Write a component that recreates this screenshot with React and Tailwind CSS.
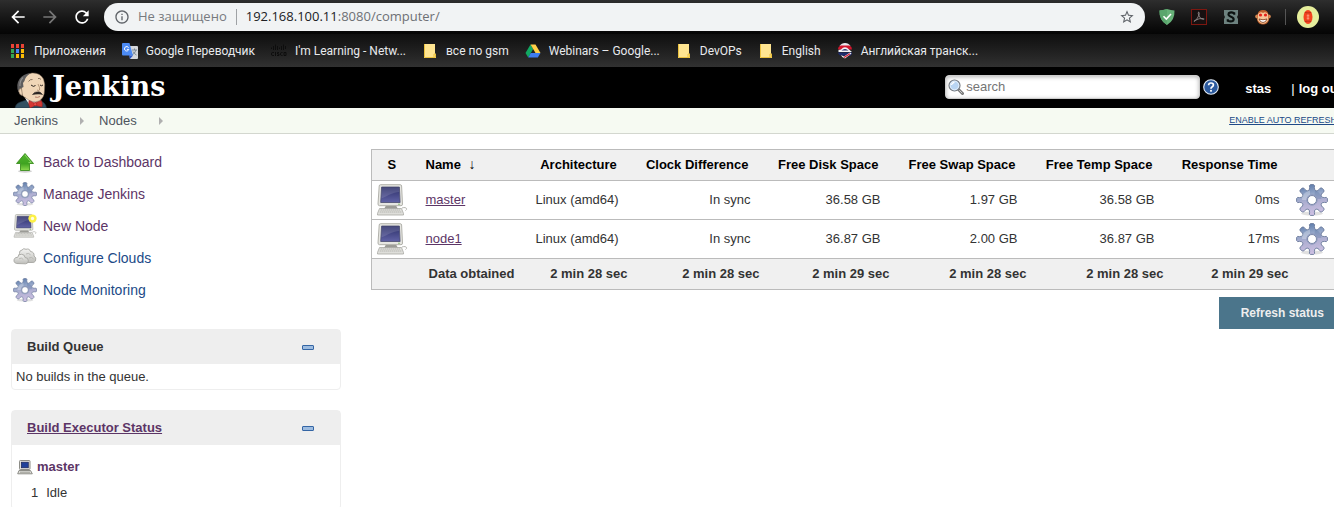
import React from "react";
import { MdArrowBack, MdArrowForward, MdRefresh, MdOutlineInfo, MdStarBorder } from "react-icons/md";

const gearPath = (() => {
  const pts = [];
  for (let i = 0; i < 8; i++) {
    const a = (i * Math.PI) / 4;
    const shape = [
      [-0.39, 10],
      [-0.28, 10.4],
      [-0.19, 12.5],
      [-0.18, 14.6],
      [-0.1, 15.5],
      [0.1, 15.5],
      [0.18, 14.6],
      [0.19, 12.5],
      [0.28, 10.4],
    ];
    shape.forEach(([d, r]) => {
      pts.push(
        `${(16 + r * Math.sin(a + d)).toFixed(2)},${(16 - r * Math.cos(a + d)).toFixed(2)}`
      );
    });
  }
  return `M${pts.join("L")}Z M20.500,16a4.500,4.500 0 1 0 -9,0a4.500,4.500 0 1 0 9,0Z`;
})();

function Gear({ className }) {
  return (
    <svg viewBox="0 0 32 32" className={className} aria-hidden="true">
      <defs>
        <linearGradient id="gearFill" x1="0.2" y1="0" x2="0.4" y2="1">
          <stop offset="0" stopColor="#5878a8" />
          <stop offset="0.35" stopColor="#94a6c8" />
          <stop offset="0.6" stopColor="#b0b0d2" />
          <stop offset="1" stopColor="#cdc0e2" />
        </linearGradient>
      </defs>
      <ellipse cx="16" cy="29.500" rx="11" ry="2" fill="#000" opacity="0.12" />
      <path d={gearPath} fill="url(#gearFill)" fillRule="evenodd" stroke="#6b7a9c" strokeWidth="0.900" strokeLinejoin="round" />
      <path d="M6 16C6 11 9 7.500 14 6.500V11C12 11.800 11 13.500 10.800 16Z" fill="#fff" opacity="0.28" />
      <path d="M19 6.500C23 7.500 25.500 11 25.500 15L21 15C20.800 13 20 12 18.500 11Z" fill="#3f5f93" opacity="0.22" />
      <circle cx="16" cy="16" r="5.200" fill="none" stroke="#8c99bb" strokeWidth="0.900" />
    </svg>
  );
}

function Computer({ className, isNew }) {
  return (
    <svg viewBox="0 0 32 32" className={className} aria-hidden="true">
      <defs>
        <linearGradient id="screenFill" x1="0" y1="0" x2="0" y2="1">
          <stop offset="0" stopColor="#2b2e68" />
          <stop offset="1" stopColor="#6163a6" />
        </linearGradient>
      </defs>
      <path d="M26 24C30 22.500 32 25 29.500 26.500" fill="none" stroke="#b5b5b0" strokeWidth="1" />
      <path d="M10 21.500H20L22 25H8Z" fill="#9b9b96" />
      <path d="M3.500 24.500H25.500L27.500 29.500V31H1.500V29.500Z" fill="#dededa" stroke="#a8a8a3" strokeWidth="0.800" />
      <path d="M4.500 26H24.500M3.800 28H25.500" stroke="#b3b3ae" strokeWidth="0.900" strokeDasharray="1.500 .5" />
      <path d="M4.500 0.700H24.300Q25.500 0.700 25.600 2L26.500 20Q26.600 21.700 25 21.700H3.500Q2 21.700 2 20L3.200 2Q3.300 0.700 4.500 0.700Z" fill="#e6e6e1" stroke="#a9a9a3" strokeWidth="0.900" />
      <path d="M5.600 3H23.400L24.100 18.500H4.700Z" fill="url(#screenFill)" stroke="#4a4c6e" strokeWidth="0.800" />
      <path d="M6 3.400H23L23.200 8C17 8 12 12 5.300 14.500Z" fill="#fff" opacity="0.130" />
      <circle cx="23" cy="20.200" r="0.700" fill="#6cab4d" />
      {isNew && (
        <g>
          <circle cx="26" cy="6" r="5.500" fill="#fcf046" />
          <circle cx="26" cy="6" r="2.200" fill="#fffde0" />
        </g>
      )}
    </svg>
  );
}

function SmallComputer() {
  return (
    <svg viewBox="0 0 16 16" className="h-4 w-4 shrink-0" aria-hidden="true">
      <rect x="2.500" y="1.500" width="10.500" height="9" rx="0.800" fill="#e8e8e4" stroke="#8c8c86" />
      <rect x="4.300" y="3.200" width="7" height="5.600" fill="#20419a" stroke="#1a2452" strokeWidth="0.700" />
      <path d="M2 11.500H13.500L15.300 14.800H0.700Z" fill="#deded9" stroke="#8c8c86" />
      <path d="M3 13.200H13" stroke="#9b9b94" />
    </svg>
  );
}

function UpArrow({ className }) {
  return (
    <svg viewBox="0 0 24 24" className={className} aria-hidden="true">
      <defs>
        <linearGradient id="arrowFill" x1="0" y1="0" x2="0" y2="1">
          <stop offset="0" stopColor="#52b52e" />
          <stop offset="0.6" stopColor="#3fa321" />
          <stop offset="1" stopColor="#8fdb4f" />
        </linearGradient>
      </defs>
      <ellipse cx="12" cy="21.300" rx="7" ry="1.500" fill="#000" opacity="0.18" />
      <path d="M12 3.500L20.500 13.500H16.500V20.500H7.500V13.500H3.500Z" fill="url(#arrowFill)" stroke="#3d8f20" strokeWidth="0.900" strokeLinejoin="round" />
      <path d="M12 5L18.300 12.500H15.500" fill="none" stroke="#a5e57e" strokeWidth="0.700" />
    </svg>
  );
}

function Clouds({ className }) {
  return (
    <svg viewBox="0 0 24 24" className={className} aria-hidden="true">
      <defs>
        <linearGradient id="cloudFill" x1="0" y1="0" x2="0" y2="1">
          <stop offset="0" stopColor="#f4f4f2" />
          <stop offset="1" stopColor="#bdbdb9" />
        </linearGradient>
      </defs>
      <path d="M7 12Q4.500 10 6.500 7.500Q6 4.500 9 4Q10.500 1.800 13 3.300Q16.500 2.200 17.500 5.500Q21.500 6 21 10Q23.800 11.500 22.500 15Q21.500 17 18 16.500H9Z" fill="url(#cloudFill)" stroke="#a6a6a2" strokeWidth="0.900" />
      <path d="M3.500 17.500Q0.200 16.500 1.200 13.300Q2 11 4.700 11.300Q5.200 7.800 8.700 8.300Q11.800 8.500 12 11.500Q15.500 11.500 15.400 15Q15 17.800 12.500 17.800Z" fill="url(#cloudFill)" stroke="#a6a6a2" strokeWidth="0.900" />
      <path d="M13 8Q15.500 6.500 17.500 8.700M16 12Q18.500 10.500 20.500 12.800M6 12.800Q8.500 11 10.300 13.500" fill="none" stroke="#b4b4b0" strokeWidth="0.900" />
    </svg>
  );
}

function AppsIcon() {
  const colors = ["#ea4335", "#ea4335", "#ea4335", "#34a853", "#4285f4", "#fbbc05", "#34a853", "#fbbc05", "#fbbc05"];
  return (
    <svg viewBox="0 0 16 16" className="h-4 w-4 shrink-0" aria-hidden="true">
      {colors.map((c, i) => (
        <rect key={i} x={1 + (i % 3) * 5} y={1 + Math.floor(i / 3) * 5} width="3" height="4" fill={c} />
      ))}
    </svg>
  );
}

function TranslateIcon() {
  return (
    <svg viewBox="0 0 16 16" className="h-4 w-4 shrink-0" aria-hidden="true">
      <path d="M6 3H15Q16 3 16 4V15Q16 16 15 16H8Z" fill="#d5d8dc" />
      <path d="M10 7H15M12.500 5.500V7M14 7Q13 10.500 10 12M11 8.500Q12.500 11 14.500 12" stroke="#71808c" strokeWidth="0.900" fill="none" />
      <path d="M1 0H7.500L11 12.500H1Q0 12.500 0 11.500V1Q0 0 1 0Z" fill="#4c8bf5" />
      <path d="M8 16L11 12.500H7Z" fill="#2a56c6" />
      <path d="M6.600 4.700A2.200 2.200 0 1 0 6.800 6.400H4.900" stroke="#fff" strokeWidth="1" fill="none" />
    </svg>
  );
}

function CiscoIcon() {
  return (
    <svg viewBox="0 0 16 16" className="h-4 w-4 shrink-0" fill="none" stroke="#0d0d0d" strokeWidth="1" aria-hidden="true">
      <path d="M0.500 4.500V6M2.500 3V7M4.500 1.500V7M6.500 3V7M8.500 4.500V6M10.500 3V7M12.500 1.500V7M14.500 3V6" />
      <path d="M3 9.500H1.500Q0.500 9.500 0.500 11Q0.500 12.500 1.500 12.500H3M4.500 9V13M8 9.500H6.500V11H8V12.500H6M11.500 9.500H10.500Q9.500 9.500 9.500 11Q9.500 12.500 10.500 12.500H11.500M13 9.500H15V12.500H13Z" />
    </svg>
  );
}

function FolderIcon() {
  return (
    <svg viewBox="0 0 16 16" className="h-4 w-4 shrink-0" aria-hidden="true">
      <path d="M2 1H13V10.500L14 11V15H2Z" fill="#ffe591" />
      <path d="M2.500 1V14.500H13.500V11H12V14.500" fill="none" stroke="#eac13e" strokeWidth="1" />
    </svg>
  );
}

function DriveIcon() {
  return (
    <svg viewBox="0 0 16 16" className="h-4 w-4 shrink-0" aria-hidden="true">
      <path d="M5.500 1.500L8.200 6L3.200 14.500L0.500 10Z" fill="#11a861" />
      <path d="M5.500 1.500H10.500L15.500 10H10.500Z" fill="#ffcf48" />
      <path d="M5.800 10H15.500L12.800 14.500H3.200Z" fill="#3f7df0" />
    </svg>
  );
}

function EnglishIcon() {
  return (
    <svg viewBox="0 0 16 16" className="h-4 w-4 shrink-0" aria-hidden="true">
      <path d="M2.500 3Q4.500 0 8 0Q11.500 0 13.500 3Z" fill="#e9e9ee" />
      <path d="M1 6Q1 3.500 3.500 2.500H12.500Q15 3.500 15 6.500H1Z" fill="#d3172e" />
      <path d="M4 6.500Q8 2 12 6.500L15 9H1.500V7Z" fill="#f4f4f6" />
      <path d="M4.500 7.500Q8 4.500 11.500 7.500Z" fill="#1e2c6b" />
      <path d="M1 9.500H15Q15.500 11 13 13L3 12.500Q1 11 1 9.500Z" fill="#1d2b6e" />
      <path d="M4 12L7 13.500L13 9.500L14.500 10.500L8 15.500Q5 15 4 12Z" fill="#f2f2f5" />
      <path d="M7 14.500L13 10.800" stroke="#d3172e" strokeWidth="1.200" />
    </svg>
  );
}

const bookmarks = [
  { label: "Приложения", Icon: AppsIcon },
  { label: "Google Переводчик", Icon: TranslateIcon },
  { label: "I'm Learning - Netw...", Icon: CiscoIcon },
  { label: "все по gsm", Icon: FolderIcon },
  { label: "Webinars – Google...", Icon: DriveIcon },
  { label: "DevOPs", Icon: FolderIcon },
  { label: "English", Icon: FolderIcon },
  { label: "Английская транск...", Icon: EnglishIcon },
];

function Extensions() {
  return (
    <div className="flex shrink-0 items-center gap-4">
      <button aria-label="Ad blocker">
        <svg viewBox="0 0 16 16" className="h-4 w-4">
          <path d="M8 0Q12 1.200 15.500 1.500Q16 11.500 8 16Q0 11.500 0.500 1.500Q4 1.200 8 0Z" fill="#67b279" />
          <path d="M8 0Q4 1.200 0.500 1.500Q0 11.500 8 16Z" fill="#5aa66d" />
          <path d="M4.500 7.200L7.300 10L12 5" fill="none" stroke="#fff" strokeWidth="1.600" />
        </svg>
      </button>
      <button aria-label="PDF">
        <svg viewBox="0 0 16 16" className="h-4 w-4">
          <rect x="0.500" y="0.500" width="15" height="15" fill="#171010" stroke="#7d1710" />
          <path d="M3 12.500Q6.500 10.500 8 6Q8.700 2.800 7.600 3Q6.600 3.500 8 7Q9.500 10.300 12.500 10.500Q14 10 12.300 9.500Q8 9 4 11.500Q2.500 12.500 3 12.500Z" fill="none" stroke="#8b8686" strokeWidth="0.900" />
        </svg>
      </button>
      <button aria-label="Stylish">
        <svg viewBox="0 0 16 16" className="h-4 w-4">
          <path d="M1 1H15V6L14 8L15 10V15H1V10L2 8L1 6Z" fill="#6d827f" />
          <path d="M11.200 5.700V4.200Q8 2.600 5.800 4.200Q4.600 6.500 8 7.700Q11.600 9 10.300 11.600Q8 13.200 4.800 11.800V10.300" fill="none" stroke="#0b1110" strokeWidth="2.200" />
        </svg>
      </button>
      <button aria-label="Monkey">
        <svg viewBox="0 0 16 16" className="h-4 w-4">
          <circle cx="2.200" cy="7.500" r="2" fill="#d98a52" />
          <circle cx="13.800" cy="7.500" r="2" fill="#d98a52" />
          <path d="M2.500 6Q3 1 8 1Q13 1 13.500 6L14 11Q12.500 15.500 8 15.500Q3.500 15.500 2 11Z" fill="#c1602c" />
          <path d="M3 5Q5.500 2 8 4Q10.500 2 13 5L13.300 11Q11 14.800 8 14.800Q5 14.800 2.700 11Z" fill="#f6c79a" />
          <circle cx="5.500" cy="6" r="1.600" fill="#e5231b" />
          <circle cx="10.500" cy="6" r="1.600" fill="#e5231b" />
          <path d="M4 10Q8 11.500 12 10Q11 13.500 8 13.500Q5 13.500 4 10Z" fill="#fff" stroke="#7c3413" strokeWidth="0.800" />
        </svg>
      </button>
    </div>
  );
}

function BrowserChrome() {
  return (
    <div className="font-['Open_Sans',sans-serif]">
      <div className="flex h-[34px] items-center bg-linear-to-b from-[#2e2e2e] to-[#050505] pr-[15px] pl-2">
        <div className="flex w-24 shrink-0 items-center gap-3">
          <button aria-label="Back" className="text-white">
            <MdArrowBack className="h-5 w-5" stroke="currentColor" />
          </button>
          <button aria-label="Forward" className="text-[#777]">
            <MdArrowForward className="h-5 w-5" stroke="currentColor" />
          </button>
          <button aria-label="Reload" className="text-white">
            <MdRefresh className="h-5 w-5" stroke="currentColor" />
          </button>
        </div>
        <div className="flex h-7 min-w-0 flex-1 items-center rounded-full bg-[#f1f3f4] px-[10px] text-[13px]">
          <MdOutlineInfo className="h-4 w-4 shrink-0 text-[#5f6368]" />
          <span className="ml-2 whitespace-nowrap text-[#777a7e]">Не защищено</span>
          <span className="mx-[9px] h-4 w-px shrink-0 bg-[#9fa2a5]" />
          <div className="min-w-0 flex-1 whitespace-nowrap text-[#6d7074]">
            <span className="text-[#202124]">192.168.100.11</span>:8080/computer/
          </div>
          <button aria-label="Bookmark this page" className="text-[#5f6368]">
            <MdStarBorder className="h-4 w-4" />
          </button>
        </div>
        <div className="flex items-center pl-[14px]">
          <Extensions />
          <span className="mr-[11px] ml-[14px] h-4 w-px bg-[#555]" />
          <button aria-label="Profile" className="flex h-[22px] w-[22px] items-center justify-center rounded-full bg-[#e6ee9c]">
            <svg viewBox="0 0 10 14" className="h-[14px] w-[10px]">
              <ellipse cx="5" cy="7" rx="4.500" ry="7" fill="#f4431f" />
              <path d="M5 3.500V10.500M3.700 5.500H6.300M3.700 7H6.300M3.700 8.500H6.300" stroke="#ffab91" strokeWidth="0.600" />
              <path d="M1.800 2.500Q5 3.500 8.200 2.500M1.800 11.500Q5 10.500 8.200 11.500" stroke="#a52714" strokeWidth="0.700" fill="none" />
            </svg>
          </button>
        </div>
      </div>
      <nav
        aria-label="Bookmarks"
        className="flex h-[33px] items-center gap-4 bg-linear-to-b from-[#0f0f0f] to-[#313131] pl-[10px] font-[Roboto,sans-serif] text-xs text-[#e8eaed]"
      >
        {bookmarks.map(({ label, Icon }) => (
          <a key={label} href="#" className="flex items-center gap-2 whitespace-nowrap">
            <Icon />
            {label}
          </a>
        ))}
      </nav>
    </div>
  );
}

function Butler() {
  return (
    <svg viewBox="0 0 34 36" className="h-9 w-[34px] shrink-0" aria-hidden="true">
      <path d="M1 36Q1.500 32 5 30.500L12 28L27 29Q32 31 32.500 36Z" fill="#335061" stroke="#1b2a35" strokeWidth="0.600" />
      <path d="M11 26L17 35L27 31L26 26Z" fill="#f4f4f2" />
      <path d="M8 9Q11 2 18 1Q26 0.500 29.500 7Q31.500 12 30.500 18Q30.500 26 25 29Q18 31.500 12.500 26.500Q7 24 7 18Z" fill="#f0d6b7" stroke="#7a6752" strokeWidth="0.500" />
      <path d="M4.500 20Q1.500 13 5.500 7Q9 2 16.500 1Q11 5 10.500 9L9 11L9.500 15L7.500 16L7 21Z" fill="#5f5e5f" />
      <path d="M9 5.500Q5.500 9 6 14" fill="none" stroke="#8f8e8e" strokeWidth="1.200" />
      <path d="M7.500 16.500Q4.500 16 4.800 19.500Q5.500 23.500 8.500 23.500Z" fill="#f0d6b7" stroke="#7a6752" strokeWidth="0.600" />
      <path d="M14.500 9.500Q16 7 18.500 7.500M24 6.500Q26 6 27 7.500" fill="none" stroke="#6f5a46" strokeWidth="0.800" />
      <path d="M17 13Q19.500 15.500 21.500 13.500M26 13Q27.500 14.500 29 13" fill="none" stroke="#2b241f" strokeWidth="1" />
      <path d="M24 12Q26.500 16.500 25.500 18Q24.500 19 23 18" fill="none" stroke="#a5876a" strokeWidth="0.800" />
      <path d="M18.500 22.500Q20.500 19.500 23.500 20Q26 19 28.500 22.500Q26.500 21.800 24.500 22Q21.500 21.800 18.500 22.500Z" fill="#2c2624" stroke="#2c2624" strokeWidth="0.600" />
      <path d="M21 25Q23.500 26 26 24.500" fill="none" stroke="#a86656" strokeWidth="0.800" />
      <path d="M15 28.500L20.500 31L27.500 28.500Q29 32 28 35L21.500 33.500L16 36Q13.800 32 15 28.500Z" fill="#d33833" stroke="#8f1f1c" strokeWidth="0.500" />
      <circle cx="21.200" cy="32.200" r="1.600" fill="#ef4b47" stroke="#8f1f1c" strokeWidth="0.500" />
    </svg>
  );
}

function JenkinsHeader() {
  return (
    <header className="flex h-[41px] items-center bg-black pr-2 pl-[14px] text-[13px] font-bold text-white">
      <a href="#" className="flex h-full items-end gap-1">
        <Butler />
        <span className="pb-[5px] font-['DejaVu_Serif',serif] text-[27px] leading-8 font-bold">Jenkins</span>
      </a>
      <form className="mb-[2px] ml-auto flex items-center gap-[3px]">
        <label className="flex h-6 w-[255px] items-center gap-[2px] rounded-[4px] border border-[#ccc] bg-white pl-[2px] shadow-[inset_0_1px_4px_rgba(0,0,0,0.3)]">
          <svg viewBox="0 0 16 16" className="h-4 w-4 shrink-0" aria-hidden="true">
            <path d="M10.500 10.500L14.500 14.500" stroke="#777" strokeWidth="3" strokeLinecap="round" />
            <path d="M11.500 11.500L14 14" stroke="#ccc" strokeWidth="1" strokeLinecap="round" />
            <circle cx="6.500" cy="6.500" r="5.500" fill="#b9d5f3" stroke="#777b80" strokeWidth="1.200" />
            <circle cx="6.500" cy="6.500" r="4.300" fill="none" stroke="#eef5fc" strokeWidth="0.800" />
            <path d="M3.500 6Q4 3.500 6.500 3.300" stroke="#fff" strokeWidth="1.200" fill="none" />
          </svg>
          <input type="text" aria-label="Search" placeholder="search" className="min-w-0 flex-1 bg-transparent font-normal text-[#333] outline-none placeholder:text-[#757575]" />
        </label>
        <a href="#" aria-label="Help">
          <svg viewBox="0 0 16 16" className="h-4 w-4">
            <circle cx="8" cy="8" r="7.300" fill="#2c5a9e" stroke="#e4ecf6" strokeWidth="1.100" />
            <path d="M5.600 6.300Q5.700 4 8 4Q10.400 4 10.400 6Q10.400 7.200 9 7.900Q8 8.500 8 9.700" fill="none" stroke="#fff" strokeWidth="1.700" />
            <rect x="7.100" y="10.900" width="1.800" height="1.800" fill="#fff" />
          </svg>
        </a>
      </form>
      <div className="mt-[2px] flex items-center whitespace-nowrap">
        <a href="#" className="ml-[26px]">stas</a>
        <span className="ml-5 font-normal">|</span>
        <a href="#" className="ml-1">log out</a>
      </div>
    </header>
  );
}

function Crumb({ children }) {
  return (
    <li className="flex items-center">
      <a href="#">{children}</a>
      <svg viewBox="0 0 4 8" className="mr-[15px] ml-[22px] h-2 w-1" aria-hidden="true">
        <path d="M0 0L4 4L0 8Z" fill="#b0b0b0" />
      </svg>
    </li>
  );
}

function Breadcrumbs() {
  return (
    <div className="flex h-[26px] items-center justify-between border-b border-[#d3d7cf] bg-[#f6faf2] pr-[13px] pl-[14px]">
      <ul className="flex items-center text-[13px] text-[#4d545d]">
        <Crumb>Jenkins</Crumb>
        <Crumb>Nodes</Crumb>
      </ul>
      <a href="#" className="text-[9px] text-[#204a87] underline">ENABLE AUTO REFRESH</a>
    </div>
  );
}

const tasks = [
  { label: "Back to Dashboard", icon: <UpArrow className="h-6 w-6" />, visited: true },
  { label: "Manage Jenkins", icon: <Gear className="h-6 w-6" />, visited: true },
  { label: "New Node", icon: <Computer className="h-6 w-6" isNew />, visited: true },
  { label: "Configure Clouds", icon: <Clouds className="h-6 w-6" />, visited: false },
  { label: "Node Monitoring", icon: <Gear className="h-6 w-6" />, visited: false },
];

function Collapse() {
  return (
    <button aria-label="Collapse" className="h-[5px] w-3 rounded-[1px] border border-[#3465a4] bg-[#9dbce0]" />
  );
}

function Panel({ title, children }) {
  return (
    <section className="rounded-[4px] border border-[#eee]">
      <div className="flex h-[34px] items-center justify-between bg-[#eee] pr-[26px] pl-[15px] text-[13px] font-bold text-[#333]">
        {title}
        <Collapse />
      </div>
      {children}
    </section>
  );
}

function Sidebar() {
  return (
    <aside className="w-[330px] shrink-0 text-[13px] text-[#333]">
      <ul className="pl-[2px]">
        {tasks.map((t) => (
          <li key={t.label} className="flex h-8 items-center gap-[6px]">
            {t.icon}
            <a href="#" className={t.visited ? "text-sm text-[#5c3566]" : "text-sm text-[#204a87]"}>
              {t.label}
            </a>
          </li>
        ))}
      </ul>
      <div className="mt-[23px] flex flex-col gap-5">
        <Panel title={<h2>Build Queue</h2>}>
          <p className="px-1 pt-[3px] pb-[2px] leading-5">No builds in the queue.</p>
        </Panel>
        <Panel
          title={
            <a href="#" className="text-[#5c3566] underline">
              Build Executor Status
            </a>
          }
        >
          <div className="flex items-center gap-1 px-[5px] pt-3 leading-5">
            <SmallComputer />
            <a href="#" className="font-bold text-[#5c3566]">
              master
            </a>
          </div>
          <div className="flex gap-2 py-[6px] pl-[19px] leading-5">
            <span>1</span>
            <span>Idle</span>
          </div>
        </Panel>
      </div>
    </aside>
  );
}

const nodes = [
  ["master", "Linux (amd64)", "In sync", "36.58 GB", "1.97 GB", "36.58 GB", "0ms"],
  ["node1", "Linux (amd64)", "In sync", "36.87 GB", "2.00 GB", "36.87 GB", "17ms"],
];
const metrics = ["Clock Difference", "Free Disk Space", "Free Swap Space", "Free Temp Space", "Response Time"];
const obtained = ["2 min 28 sec", "2 min 29 sec", "2 min 28 sec", "2 min 28 sec", "2 min 29 sec"];

function NodesTable() {
  return (
    <table className="w-full table-fixed border-collapse border border-[#bbb] text-[13px] whitespace-nowrap text-[#333]">
      <colgroup>
        <col className="w-11" />
        <col className="w-[110px]" />
        <col className="w-[110px]" />
        <col className="w-[125px]" />
        <col className="w-[130px]" />
        <col className="w-[137px]" />
        <col className="w-[137px]" />
        <col className="w-[125px]" />
        <col />
      </colgroup>
      <thead>
        <tr className="h-[31px] border-b border-[#bbb] bg-[#f0f0f0] text-black">
          <th className="pr-1">S</th>
          <th className="pl-[10px] text-left">
            Name <span className="ml-1 font-['Liberation_Serif',serif] text-sm leading-4 font-normal">↓</span>
          </th>
          <th className="pr-1 text-center">Architecture</th>
          {metrics.map((m) => (
            <th key={m} className="pr-3 text-right">{m}</th>
          ))}
          <th aria-label="Configure" />
        </tr>
      </thead>
      <tbody>
        {nodes.map(([name, arch, ...values]) => (
          <tr key={name} className="h-[39px] border-b border-[#bbb]">
            <td className="pl-1">
              <Computer className="h-8 w-8" />
            </td>
            <td className="pl-[10px]">
              <a href="#" className="text-[#5c3566] underline">{name}</a>
            </td>
            <td className="pl-[10px]">{arch}</td>
            {values.map((v, i) => (
              <td key={i} className="pr-[10px] text-right">{v}</td>
            ))}
            <td className="pl-[6px]">
              <a href="#" aria-label={"Configure " + name}>
                <Gear className="h-8 w-8" />
              </a>
            </td>
          </tr>
        ))}
      </tbody>
      <tfoot>
        <tr className="h-[31px] bg-[#f0f0f0]">
          <th />
          <th className="pl-[2px] text-center">Data obtained</th>
          <th className="pr-2 text-right">2 min 28 sec</th>
          {obtained.map((o, i) => (
            <th key={i} className="pr-px text-right">{o}</th>
          ))}
          <th />
        </tr>
      </tfoot>
    </table>
  );
}

export default function App() {
  return (
    <div className="h-screen overflow-hidden bg-white font-['Liberation_Sans',Arial,sans-serif]">
      <BrowserChrome />
      <div className="min-w-[1350px]">
        <JenkinsHeader />
        <Breadcrumbs />
        <div className="flex items-start gap-[30px] pt-3 pr-1 pl-[11px]">
          <Sidebar />
          <main className="min-w-0 flex-1 pt-[3px]">
            <NodesTable />
            <div className="mt-[7px] flex justify-end">
              <button className="h-8 bg-[#4b758b] px-[22px] text-xs font-bold text-[#eee]">Refresh status</button>
            </div>
          </main>
        </div>
      </div>
    </div>
  );
}
